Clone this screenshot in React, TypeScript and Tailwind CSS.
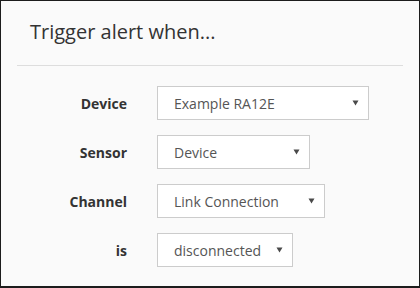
import { ReactNode } from "react";

interface FieldProps {
  label: string;
  value: string;
  width: string;
}

function Caret() {
  return (
    <svg width="7" height="6" viewBox="0 0 7 6" className="shrink-0">
      <path d="M0.5 0.5 H6.5 L3.5 5.5 Z" fill="#4a4a4a" />
    </svg>
  );
}

function Field({ label, value, width }: FieldProps) {
  return (
    <div className="flex items-center">
      <div className="w-[110px] text-right text-[14px] font-bold text-[#333]">{label}</div>
      <div
        className={`ml-[30px] h-[34px] ${width} flex items-center justify-between border border-[#ccc] bg-white pl-[16px] pr-[9px] text-[14px] text-[#555]`}
      >
        <span>{value}</span>
        <Caret />
      </div>
    </div>
  );
}

function Panel({ children }: { children: ReactNode }) {
  return (
    <div className="w-[420px] h-[288px] border border-[#1c1c1c] border-b-2 bg-[#fafafa] overflow-hidden">
      {children}
    </div>
  );
}

export default function App() {
  return (
    <div style={{ fontFamily: '"Open Sans", sans-serif' }}>
      <Panel>
        <h2 className="pl-[29px] pt-[17px] pb-[19px] text-[20px] leading-[28px] text-[#333]">
          Trigger alert when...
        </h2>
        <div className="mx-[16px] border-t border-[#ddd]" />
        <div className="pl-[16px] pt-[20px] flex flex-col gap-[15px]">
          <Field label="Device" value="Example RA12E" width="w-[212px]" />
          <Field label="Sensor" value="Device" width="w-[153px]" />
          <Field label="Channel" value="Link Connection" width="w-[168px]" />
          <Field label="is" value="disconnected" width="w-[136px]" />
        </div>
      </Panel>
    </div>
  );
}
